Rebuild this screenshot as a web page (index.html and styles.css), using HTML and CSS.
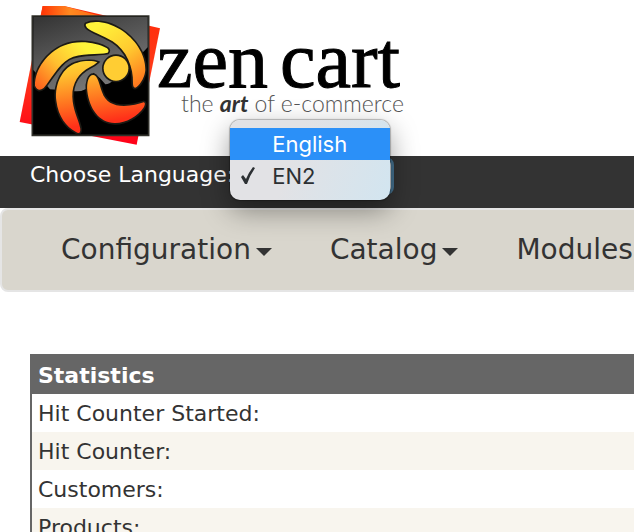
FILE: index.html
```html
<!DOCTYPE html>
<html lang="en">
  <head>
    <meta charset="UTF-8" />
    <meta name="viewport" content="width=device-width, initial-scale=1.0" />
    <title>Zen Cart Admin</title>
    <link rel="stylesheet" href="styles.css" />
  </head>
  <body>
    <header class="header">
      <a class="logo" href="#" aria-label="Zen Cart, the art of e-commerce">
        <svg width="420" height="156" viewBox="0 0 420 156">
          <defs>
            <linearGradient id="card" x1="0" y1="0" x2="0" y2="1">
              <stop offset="0" stop-color="#ff2a08" />
              <stop offset="0.45" stop-color="#ff3a18" />
              <stop offset="1" stop-color="#ff0018" />
            </linearGradient>
            <linearGradient id="shine" x1="0.1" y1="0" x2="0.6" y2="1">
              <stop offset="0" stop-color="#363636" />
              <stop offset="1" stop-color="#7c7c7c" />
            </linearGradient>
            <linearGradient id="orange" gradientUnits="userSpaceOnUse" x1="130" y1="0" x2="330" y2="0">
              <stop offset="0" stop-color="#ff3a08" />
              <stop offset="0.4" stop-color="#ff8a20" />
              <stop offset="1" stop-color="#ff5a10" />
            </linearGradient>
            <linearGradient id="flame" gradientUnits="userSpaceOnUse" x1="250" y1="130" x2="290" y2="370">
              <stop offset="0" stop-color="#fff038" />
              <stop offset="0.35" stop-color="#ffc02e" />
              <stop offset="0.7" stop-color="#ff7420" />
              <stop offset="1" stop-color="#ff3019" />
            </linearGradient>
            <linearGradient id="flame-left" gradientUnits="userSpaceOnUse" x1="250" y1="140" x2="120" y2="270">
              <stop offset="0" stop-color="#fff43a" />
              <stop offset="0.5" stop-color="#ffc030" />
              <stop offset="1" stop-color="#ff611c" />
            </linearGradient>
            <linearGradient id="flame-right" gradientUnits="userSpaceOnUse" x1="290" y1="80" x2="420" y2="260">
              <stop offset="0" stop-color="#fff43a" />
              <stop offset="0.5" stop-color="#ffca30" />
              <stop offset="1" stop-color="#ff701c" />
            </linearGradient>
          </defs>
          <!-- the mark is drawn on a grid three times finer than the logo -->
          <g transform="scale(0.33333)">
            <path d="M128 18H192L480 85L410 434L59 366Z" fill="url(#card)" />
            <path d="M128 18H192L330 56H120Z" fill="url(#orange)" />
            <path d="M97 48H446V406H97Z" fill="#000" stroke="#30302a" stroke-width="5" />
            <path d="M100 51H443V142Q425 165 370 200Q340 252 316 253L300 235L280 218L260 266Q238 278 216 272L150 268L100 210Z" fill="url(#shine)" />
            <g stroke="#1c1a14" stroke-width="10" paint-order="stroke">
              <path d="M258 72C280 60 325 65 360 88C405 116 437 163 436 210C435 228 424 250 410 261C403 267 399 260 399 250C401 203 380 151 338 124C309 106 274 95 261 83Q255 76 258 72Z" fill="url(#flame-right)" />
              <path d="M105 257C104 208 142 157 190 137C232 119 289 126 321 145Q329 152 323 158C295 165 239 158 207 176C174 195 153 239 131 264Q114 277 105 257Z" fill="url(#flame-left)" />
              <path d="M169 302C163 250 189 199 232 188C257 181 282 183 292 187Q285 194 269 202C237 219 216 248 217 290C218 329 235 356 241 386Q242 405 228 396C199 380 175 350 169 302Z" fill="url(#flame)" />
              <path d="M262 274C259 247 267 224 280 225C294 227 297 251 306 276C316 305 339 318 372 318C396 318 416 312 431 307Q438 309 432 321C413 350 376 370 344 369C298 369 268 326 262 274Z" fill="url(#flame)" />
              <circle cx="348" cy="205" r="37" fill="#ffcd33" />
            </g>
          </g>
          <text class="logo-name" y="87"><tspan x="157">zen</tspan> <tspan x="280">cart</tspan></text>
          <text class="logo-tagline" x="181" y="112">the <tspan class="logo-art">art</tspan> of e-commerce</text>
        </svg>
      </a>
    </header>

    <form class="language">
      <label for="language">Choose Language:</label>
      <div class="picker">
        <select class="picker-select" id="language" name="language">
          <option>English</option>
          <option selected>EN2</option>
        </select>
        <ul class="picker-menu" role="listbox" aria-label="Choose Language">
          <li class="picker-item picker-item-active" role="option" aria-selected="false">English</li>
          <li class="picker-item" role="option" aria-selected="true">
            <svg class="picker-check" width="16" height="18" viewBox="0 0 16 18">
              <path d="M1 10L3 8L6 12Q9 5 13 0L15 1Q10 8 7 17H5Z" fill="#2c3033" />
            </svg>
            EN2
          </li>
        </ul>
      </div>
    </form>

    <nav class="menu">
      <a class="menu-link" href="#">Configuration<span class="caret"></span></a>
      <a class="menu-link" href="#">Catalog<span class="caret"></span></a>
      <a class="menu-link" href="#">Modules<span class="caret"></span></a>
    </nav>

    <main class="content">
      <table class="stats">
        <thead>
          <tr><th>Statistics</th></tr>
        </thead>
        <tbody>
          <tr><td>Hit Counter Started:</td></tr>
          <tr><td>Hit Counter:</td></tr>
          <tr><td>Customers:</td></tr>
          <tr><td>Products:</td></tr>
        </tbody>
      </table>
    </main>
  </body>
</html>
```

FILE: styles.css
```css
* {
  box-sizing: border-box;
}

html {
  overflow: hidden;
}

body {
  margin: 0;
  background-color: #fff;
  color: #333;
  font-family: Verdana, 'DejaVu Sans', sans-serif;
  font-size: 22px;
  line-height: 36px;
}

a {
  color: inherit;
  text-decoration: none;
}

svg {
  display: block;
}

/* Logo */

.logo {
  display: block;
}

.logo-name {
  font-family: 'Liberation Serif', serif;
  font-size: 80px;
  fill: #000;
  stroke: #000;
  stroke-width: 1px;
}

.logo-tagline {
  font-family: Lato, sans-serif;
  font-size: 23px;
  font-weight: 300;
  fill: #555;
}

.logo-art {
  font-style: italic;
  font-weight: 700;
  fill: #333;
}

/* Language bar */

.language {
  display: flex;
  height: 52px;
  padding: 1px 0 0 30px;
  background-color: #333;
  color: #fff;
}

.picker {
  position: relative;
}

.picker-select {
  display: block;
  width: 160px;
  height: 38px;
  border: 3px solid #45718f;
  border-radius: 8px;
  background-color: #fff;
  font: inherit;
}

.picker-menu {
  position: absolute;
  z-index: 1;
  top: -37px;
  left: -4px;
  width: 160px;
  margin: 0;
  padding: 8px 0;
  border-radius: 10px;
  background-image: linear-gradient(110deg, #e2e2e5 40%, #d2e5f0);
  box-shadow: 0 0 1px 1px rgba(0, 0, 0, 0.25), 0 10px 28px rgba(0, 0, 0, 0.4);
  color: #2c3033;
  font-family: Inter, sans-serif;
  line-height: 32px;
  list-style: none;
}

.picker-item {
  position: relative;
  padding-left: 42px;
}

.picker-item-active {
  background-color: #2b90f8;
  color: #fff;
}

.picker-check {
  position: absolute;
  top: 7px;
  left: 10px;
}

/* Main menu */

.menu {
  display: flex;
  /* runs past the right edge, like the links in it */
  margin-right: -12px;
  padding: 20px 30px;
  border: 2px solid #e5e5e5;
  border-radius: 8px;
  background-color: #d9d6cd;
  font-size: 28px;
  line-height: 40px;
}

.menu-link {
  display: flex;
  flex-shrink: 0;
  align-items: center;
  gap: 5px;
  padding: 0 29px;
}

.caret {
  border: 8px solid transparent;
  border-top-color: #333;
  border-bottom: 0;
  margin-top: 4px;
}

/* Statistics */

.content {
  padding: 62px 0 0 30px;
}

.stats {
  width: 100%;
  border-left: 2px solid #666;
  border-spacing: 0;
  text-align: left;
}

.stats th,
.stats td {
  padding: 2px 6px 0;
}

.stats th {
  padding-top: 4px;
  background-color: #666;
  color: #fff;
}

.stats tbody tr:nth-child(even) {
  background-color: #f8f5ee;
}
```
